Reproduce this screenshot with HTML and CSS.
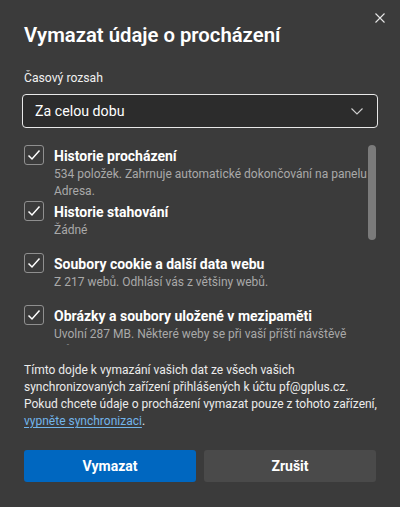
FILE: index.html
```html
<!DOCTYPE html>
<html lang="cs">
<head>
<meta charset="utf-8">
<title>Vymazat údaje o procházení</title>
<link rel="stylesheet" href="styles.css">
</head>
<body>
<div class="dialog">
  <button class="close" aria-label="Zavřít">
    <svg width="10" height="10" viewBox="0 0 10 10"><path d="M0.5 0.5 L9.5 9.5 M9.5 0.5 L0.5 9.5" stroke="#e6e6e6" stroke-width="1.1" fill="none"/></svg>
  </button>
  <h1 class="title">Vymazat údaje o procházení</h1>
  <div class="field-label">Časový rozsah</div>
  <div class="select">
    <span>Za celou dobu</span>
    <svg class="chevron" width="12" height="7" viewBox="0 0 12 7"><path d="M0.5 0.5 L6 6 L11.5 0.5" stroke="#d0d0d0" stroke-width="1.1" fill="none"/></svg>
  </div>
  <div class="scroll-area">
    <div class="list">
      <div class="item item-first">
        <span class="checkbox"><svg width="14" height="12" viewBox="0 0 14 12"><path d="M1.5 6.5 L5 10 L12.5 1.5" stroke="#fff" stroke-width="1.5" fill="none"/></svg></span>
        <div class="item-text">
          <div class="item-title">Historie procházení</div>
          <div class="item-desc">534 položek. Zahrnuje automatické dokončování na panelu Adresa.</div>
        </div>
      </div>
      <div class="item">
        <span class="checkbox"><svg width="14" height="12" viewBox="0 0 14 12"><path d="M1.5 6.5 L5 10 L12.5 1.5" stroke="#fff" stroke-width="1.5" fill="none"/></svg></span>
        <div class="item-text">
          <div class="item-title">Historie stahování</div>
          <div class="item-desc">Žádné</div>
        </div>
      </div>
      <div class="item">
        <span class="checkbox"><svg width="14" height="12" viewBox="0 0 14 12"><path d="M1.5 6.5 L5 10 L12.5 1.5" stroke="#fff" stroke-width="1.5" fill="none"/></svg></span>
        <div class="item-text">
          <div class="item-title">Soubory cookie a další data webu</div>
          <div class="item-desc">Z 217 webů. Odhlásí vás z většiny webů.</div>
        </div>
      </div>
      <div class="item">
        <span class="checkbox"><svg width="14" height="12" viewBox="0 0 14 12"><path d="M1.5 6.5 L5 10 L12.5 1.5" stroke="#fff" stroke-width="1.5" fill="none"/></svg></span>
        <div class="item-text">
          <div class="item-title">Obrázky a soubory uložené v mezipaměti</div>
          <div class="item-desc">Uvolní 287 MB. Některé weby se při vaší příští návštěvě můžou načítat pomaleji.</div>
        </div>
      </div>
    </div>
    <div class="scrollbar"><div class="thumb"></div></div>
  </div>
  <p class="info">Tímto dojde k vymazání vašich dat ze všech vašich<br>synchronizovaných zařízení přihlášených k účtu pf@gplus.cz.<br>Pokud chcete údaje o procházení vymazat pouze z tohoto zařízení,<br><a href="#" class="link">vypněte synchronizaci</a>.</p>
  <div class="actions">
    <button class="btn btn-primary">Vymazat</button>
    <button class="btn btn-secondary">Zrušit</button>
  </div>
</div>
</body>
</html>
```

FILE: styles.css
```css
html, body {
  margin: 0;
  padding: 0;
  background: #3b3b3b;
}
body {
  font-family: Roboto, "Open Sans", "Liberation Sans", sans-serif;
  color: #ffffff;
  width: 400px;
  height: 507px;
  overflow: hidden;
}
.dialog {
  position: relative;
  padding: 0 24px 24px 24px;
  display: flex;
  flex-direction: column;
}
.close {
  position: absolute;
  top: 8px;
  right: 10px;
  width: 20px;
  height: 20px;
  padding: 0;
  border: none;
  background: transparent;
  display: flex;
  align-items: center;
  justify-content: center;
}
.title {
  margin: 21px 0 0 0;
  font-size: 20.3px;
  line-height: 28px;
  font-weight: 600;
  color: #ffffff;
}
.field-label {
  margin-top: 20px;
  font-size: 12.2px;
  line-height: 18px;
  color: #f0f0f0;
}
.select {
  margin: 7px -2px 0 -2px;
  height: 34px;
  box-sizing: border-box;
  border: 1.5px solid #e8e8e8;
  border-radius: 4px;
  background: #2c2c2c;
  display: flex;
  align-items: center;
  justify-content: space-between;
  padding: 0 14px 0 12px;
}
.select span {
  font-size: 14.2px;
  color: #ffffff;
}
.scroll-area {
  margin-top: 17px;
  display: flex;
}
.list {
  flex: 1;
  height: 200px;
  overflow: hidden;
  display: flex;
  flex-direction: column;
  gap: 14px;
}
.item {
  display: flex;
  gap: 10px;
  flex: none;
}
.item-first {
  margin-bottom: -13px;
}
.checkbox {
  flex: none;
  width: 20px;
  height: 20px;
  box-sizing: border-box;
  border: 1px solid #8f8f8f;
  border-radius: 3px;
  display: flex;
  align-items: center;
  justify-content: center;
}
.item-text {
  flex: 1;
  min-width: 0;
  padding-top: 1px;
}
.item-title {
  font-size: 14px;
  line-height: 20px;
  font-weight: 700;
  color: #ffffff;
}
.item-desc {
  font-size: 12px;
  line-height: 17px;
  color: #a9a9a9;
}
.scrollbar {
  flex: none;
  width: 8px;
}
.thumb {
  height: 95px;
  border-radius: 4px;
  background: #7b7b7b;
}
.info {
  margin: 17px 0 0 0;
  font-size: 12px;
  line-height: 17px;
  color: #ececec;
  white-space: nowrap;
}
.link {
  color: #72b4ea;
  text-decoration: underline;
  text-underline-offset: 2px;
}
.actions {
  margin-top: 20px;
  display: flex;
  gap: 8px;
}
.btn {
  flex: 1;
  height: 32px;
  border: none;
  border-radius: 3px;
  font-family: inherit;
  font-size: 14px;
  font-weight: 700;
  color: #ffffff;
}
.btn-primary {
  background: #0067c0;
}
.btn-secondary {
  background: #4a4a4a;
}
```
